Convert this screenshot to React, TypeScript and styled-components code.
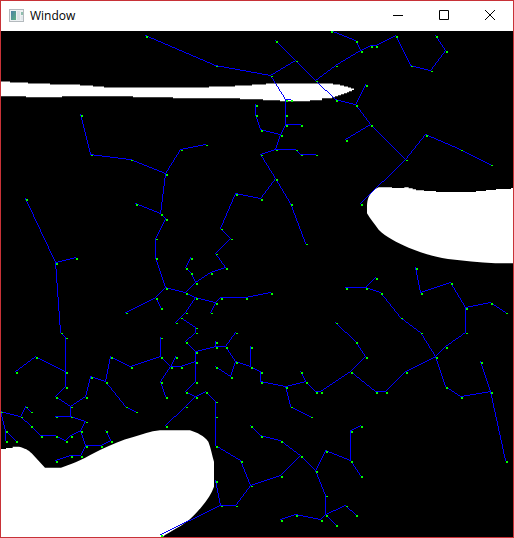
import React from "react";
import styled, { createGlobalStyle } from "styled-components";

const GlobalStyle = createGlobalStyle`
  * { box-sizing: border-box; }
  body { margin: 0; background: #fff; }
`;

const WindowFrame = styled.main`
  display: flex;
  flex-direction: column;
  height: 100vh;
  border: 1px solid #c83237;
  background: #fff;
  font-family: "Open Sans", "Noto Sans", sans-serif;
`;

const TitleBar = styled.header`
  display: flex;
  align-items: center;
  flex: none;
  height: 30px;
  padding-left: 8px;
  gap: 5px;
`;

const Title = styled.h1`
  margin: 0;
  flex: 1;
  color: #000;
  font-size: 12px;
  font-weight: 400;
  line-height: 16px;
`;

const AppIcon = styled.svg`
  display: block;
  flex: none;
`;

const Controls = styled.div`
  display: flex;
  align-self: stretch;
`;

const ControlButton = styled.button<{ $danger?: boolean }>`
  display: flex;
  align-items: center;
  justify-content: center;
  width: 46px;
  margin: 0;
  padding: 0 0 2px;
  border: 0;
  background: transparent;
  color: #000;
  &:hover {
    background: ${(p) => (p.$danger ? "#e81123" : "#e5e5e5")};
    color: ${(p) => (p.$danger ? "#fff" : "#000")};
  }
`;

const Canvas = styled.svg`
  display: block;
  flex: 1;
  width: 100%;
  min-height: 0;
  background: #000;
`;

// Each chain is a run of connected nodes; a trailing "s" marks a one-row dot.
const chains = [
  "146,36 216,66s 271,76s 296,61s",
  "276,41 296,61s 316,81s 336,100 356,105 366,85",
  "271,76s 286,100 286,115 286,125 281,135 276,150s 296,150s 301,155s 316,155s",
  "286,100 291,100",
  "286,125 301,125",
  "256,105 256,115 261,130 281,135",
  "316,81s 336,66s 361,51 371,46 376,46 396,36 411,66s 431,71s 446,51 436,36",
  "361,51 356,41 331,31",
  "356,105 371,125 346,140",
  "371,125 406,160s 426,135 461,150s 491,165s",
  "406,160s 361,204",
  "81,115 91,155s 131,160s 166,174 181,150s 206,145s",
  "166,174 161,214 136,204",
  "161,214 166,219 156,239s 156,258 166,288 186,293 196,298 216,303 221,298 246,298 271,293",
  "26,199 56,263 76,258",
  "56,263 61,333s 66,338s 66,372 66,387 56,397 71,407s 71,417s 56,417s",
  "276,150s 261,155s 276,179 291,204 306,244s",
  "276,179 261,199 236,194 221,229s 231,239s 216,254s 226,268 211,273 196,283 191,273 186,268 191,258",
  "196,283 186,293",
  "166,288 156,298 126,313s",
  "156,298 161,308",
  "216,303 211,313s",
  "196,298 186,313s 181,318s 176,323s",
  "181,318s 196,328s 196,333s 186,342 196,352 216,347 226,347 236,333s",
  "216,342 216,347",
  "226,347 236,362 231,377 216,367",
  "236,362 251,367 251,347",
  "251,367 261,372 261,382 286,387 291,407s 311,417s",
  "286,387 306,382 301,372",
  "306,382 316,392 321,392 351,372 366,357 356,342 336,323s",
  "351,372 376,392 386,392 406,372 436,357 446,347 466,333s 466,308 451,283 421,293 416,268",
  "466,308 491,303 506,313s",
  "436,357 421,333s 401,318s 381,293 366,288 346,288",
  "366,288 376,278",
  "436,357 446,387 461,397 491,392 481,362",
  "491,392 506,461",
  "196,352 196,362 196,382 186,392 196,397 206,392 216,402s 216,417s 216,446 241,461 251,486s 281,476 301,456 281,441 261,436 251,426",
  "301,456 316,471 326,451 351,461 351,431 361,426",
  "351,461 361,476",
  "316,471 326,496s 326,515 346,506s 356,515",
  "326,515 336,525",
  "326,515 321,520 296,515 281,520",
  "251,486s 236,506s 221,506s 216,481",
  "221,506s 161,535",
  "196,397 186,407s 166,426",
  "196,362 181,367 171,367 176,357",
  "171,367 161,357 161,338s",
  "161,357 131,367 111,357 106,382 91,377 86,397 71,407s",
  "106,382 126,407s 136,412s",
  "171,367 161,382 166,397",
  "66,372 36,357 16,372",
  "71,417s 86,422s 81,431 71,436 66,441 56,436 41,436 31,426 21,417s 26,407s 31,412s",
  "21,417s 1,412s 6,431 6,441",
  "6,431 16,441",
  "81,431 86,446 101,446 111,441 106,431",
  "86,446 81,456 71,456 56,461",
];

type Node = { x: number; y: number; height: number };

const parseNode = (text: string): Node => {
  const [x, y] = text.replace("s", "").split(",").map(Number);
  return { x, y, height: text.endsWith("s") ? 1 : 2 };
};

const paths = chains.map((chain) => chain.split(" ").map(parseNode));
const nodes = Array.from(
  new Map(paths.flat().map((n) => [`${n.x},${n.y}`, n] as const)).values()
);

// Unit cells along a segment, so the edges keep their hard pixel steps.
const segmentCells = (a: Node, b: Node): string => {
  const steps = Math.max(Math.abs(b.x - a.x), Math.abs(b.y - a.y));
  return Array.from({ length: steps + 1 }, (_, i) => {
    const x = Math.round(a.x - 1 + ((b.x - a.x) * i) / steps);
    const y = Math.round(a.y - 1 + ((b.y - a.y) * i) / steps);
    return `M${x} ${y}h1v1h-1z`;
  }).join("");
};

const chainCells = (path: Node[]) =>
  path.slice(1).map((node, i) => segmentCells(path[i], node)).join("");

const Obstacles = () => (
  <g fill="#fff">
    <path d="M0 81.4H10V82.4H28V83.4H50V84.4H80V85.4H93V86.4H104V87.4H209V86.4H235V85.4H252V84.4H266V83.4H333V84.4H340V85.4H344V86.4H348V87.4H351V88.4H354V90H352V91.2H349V92.2H347V93.2H344V94.2H341V95.2H338V96.2H335V97.2H332V98.2H322V100.2H310V101.2H280V100.2H263V99.2H240V98.2H173V97.2H133V96.2H62V97.2H26V96.2H0Z" />
    <g transform="translate(342 135) scale(.333333)">
      <path d="M98 163L110 157H150V159H187V157H200V160H212V163H222V166H246V168H282V171H402V168H432V165H462V162H507V159H516V385H460C410 381 365 378 318 372C270 364 235 352 200 338C165 322 132 306 110 284C98 268 85 252 75 235V212C76 192 80 180 98 163Z" />
    </g>
    <g transform="translate(0 400) scale(.333333)">
      <path d="M0 147H18V144H38V140H57C75 145 85 149 95 160L135 203H183C206 195 222 189 240 181C262 170 280 160 300 150C333 134 365 120 400 111C427 103 450 94 480 91H570C592 98 612 108 625 125C633 145 636 165 642 185V260C635 280 622 300 605 320C590 338 575 354 558 367C538 381 516 393 495 405L485 414H0Z" />
    </g>
  </g>
);

const Roadmap = () => (
  <Canvas viewBox="1 31 512 506" role="img" aria-label="Roadmap of connected nodes around white obstacles">
    <Obstacles />
    <g fill="#0000ff" shapeRendering="crispEdges">
      {paths.map((path, i) => (
        <path key={i} d={chainCells(path)} />
      ))}
    </g>
    <g fill="#00ff00" shapeRendering="crispEdges">
      {nodes.map((n) => (
        <rect key={`${n.x},${n.y}`} x={n.x} y={n.y} width="2" height={n.height} />
      ))}
    </g>
  </Canvas>
);

const WindowIcon = () => (
  <AppIcon width="16" height="16" viewBox="0 0 16 16" aria-hidden="true">
    <defs>
      <linearGradient id="pane" x1="0" y1="0" x2="1" y2="1">
        <stop offset="0" stopColor="#4a7fa5" />
        <stop offset="1" stopColor="#5fb083" />
      </linearGradient>
    </defs>
    <path d="M0 1H15V14H0Z" fill="#b4babe" />
    <path d="M1 2H14V13H1Z" fill="#eef1f3" />
    <path d="M2 3H7V12H2Z" fill="url(#pane)" />
    <path d="M8 3H11V12H8Z" fill="#dde2e6" />
    <path d="M12 4H14V7H12Z" fill="#8fbfae" />
    <path d="M12 8H14V12H12Z" fill="#e2e8ec" />
  </AppIcon>
);

const ControlIcon = ({ d }: { d: string }) => (
  <svg width="10" height="10" viewBox="0 0 10 10" fill="none" stroke="currentColor" aria-hidden="true">
    <path d={d} />
  </svg>
);

export default function App() {
  return (
    <>
      <GlobalStyle />
      <WindowFrame>
        <TitleBar>
          <WindowIcon />
          <Title>Window</Title>
          <Controls>
            <ControlButton type="button" aria-label="Minimize">
              <ControlIcon d="M0 5.5H10" />
            </ControlButton>
            <ControlButton type="button" aria-label="Maximize">
              <ControlIcon d="M.5 .5H9.5V9.5H.5Z" />
            </ControlButton>
            <ControlButton type="button" aria-label="Close" $danger>
              <ControlIcon d="M0 0L10 10M10 0L0 10" />
            </ControlButton>
          </Controls>
        </TitleBar>
        <Roadmap />
      </WindowFrame>
    </>
  );
}
